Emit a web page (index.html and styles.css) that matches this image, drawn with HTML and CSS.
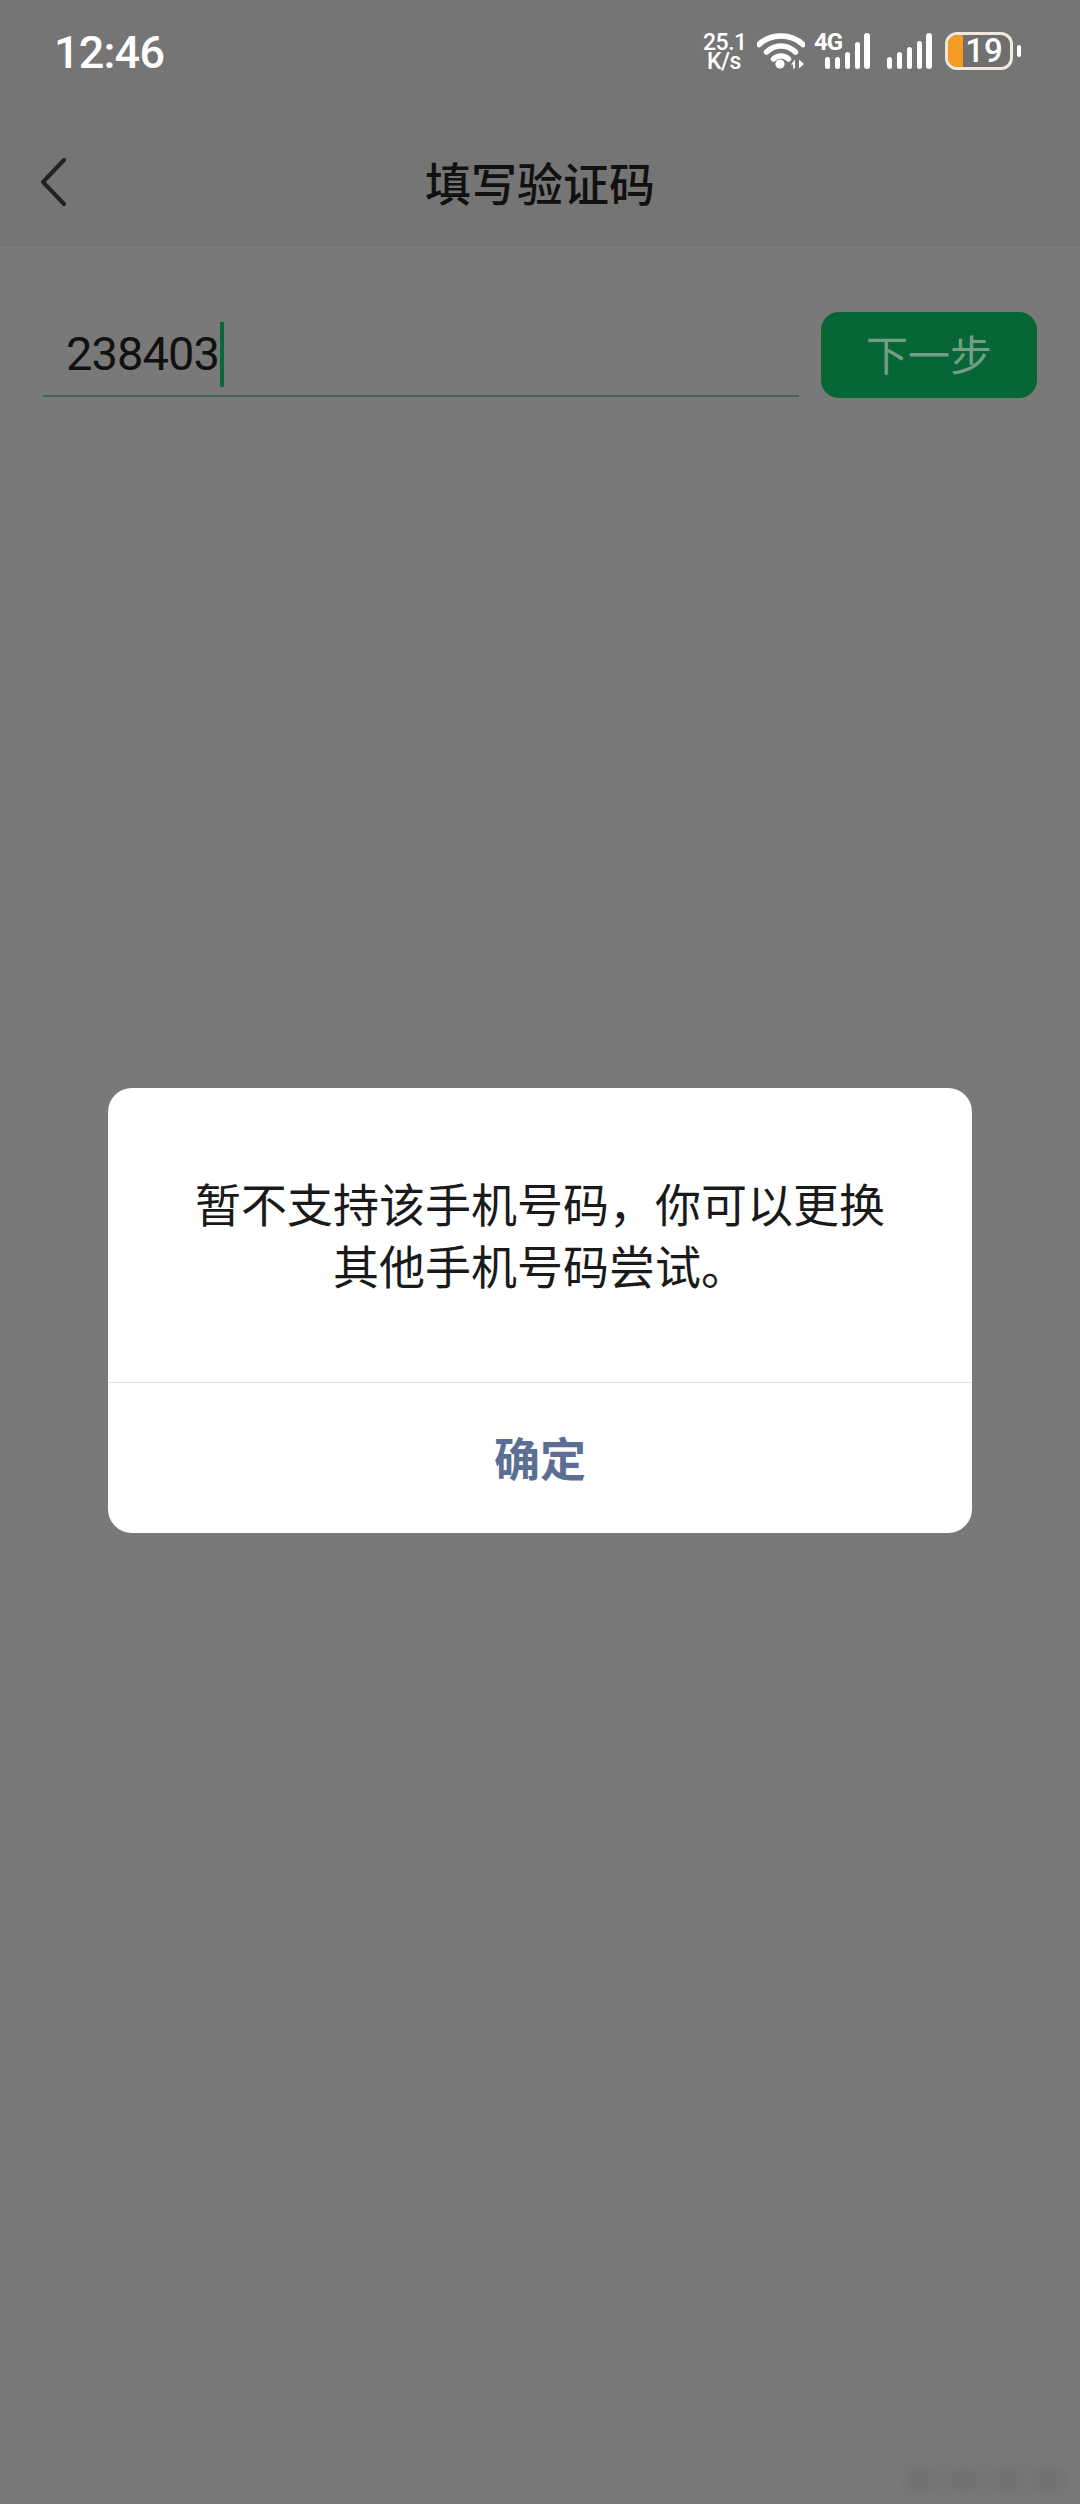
FILE: index.html
```html
<!DOCTYPE html>
<html lang="zh-CN">
<head>
<meta charset="utf-8">
<title>填写验证码</title>
<link rel="stylesheet" href="styles.css">
</head>
<body>
<div class="screen">
  <div class="status">
    <span class="time">12:46</span>
    <div class="status-icons">
      <div class="speed">25.1<br>K/s</div>
      <svg class="wifi" width="48" height="36" viewBox="0 0 48 36">
        <path d="M2 11.5C14 0 34 0 46 11.5" class="arc"/>
        <path d="M9.5 19C18 11 30 11 38.5 19" class="arc"/>
        <path d="M16.5 26C21 22 27 22 31.5 26" class="arc"/>
        <circle cx="23" cy="31" r="4.6" fill="#fff"/>
        <path d="M34 31.5l4-5v9h-1.8v-4zM42 26.5l5 4.5-5 4.5z" fill="#fff"/>
      </svg>
      <div class="net">
        <span class="g4">4G</span>
        <svg width="50" height="36" viewBox="0 0 50 36">
          <rect x="1" y="24" width="5" height="12" rx="2.5"/>
          <rect x="11" y="24" width="5" height="12" rx="2.5"/>
          <rect x="21" y="19" width="5" height="17" rx="2.5"/>
          <rect x="31" y="9" width="5" height="27" rx="2.5"/>
          <rect x="40" y="0" width="6" height="36" rx="3"/>
        </svg>
      </div>
      <svg class="sig" width="46" height="36" viewBox="0 0 46 36">
        <rect x="0" y="24" width="5" height="12" rx="2.5"/>
        <rect x="10" y="19" width="5" height="17" rx="2.5"/>
        <rect x="20" y="14" width="5" height="22" rx="2.5"/>
        <rect x="30" y="8" width="5" height="28" rx="2.5"/>
        <rect x="39" y="0" width="6" height="36" rx="3"/>
      </svg>
      <div class="battery">
        <div class="batt-body"><i class="batt-fill"></i><span>19</span></div>
        <i class="batt-cap"></i>
      </div>
    </div>
  </div>

  <header class="nav">
    <svg class="back" width="28" height="48" viewBox="0 0 28 48">
      <path d="M25 2L4 24l21 22" fill="none" stroke="#222" stroke-width="4" stroke-linecap="round" stroke-linejoin="round"/>
    </svg>
    <h1>填写验证码</h1>
  </header>

  <form class="form">
    <div class="field"><span class="value">238403</span><i class="caret"></i></div>
    <div class="next">下一步</div>
  </form>

  <div class="watermark"><i></i><i></i><i></i><i></i></div>

  <div class="overlay">
    <div class="dialog">
      <p class="msg">暂不支持该手机号码，你可以更换<br>其他手机号码尝试。</p>
      <div class="ok">确定</div>
    </div>
  </div>
</div>
</body>
</html>
```
FILE: styles.css
```css
* { box-sizing: border-box; }
html, body { margin: 0; padding: 0; }
body { font-family: Roboto, "Noto Sans CJK SC", sans-serif; background: #787878; }
.screen { position: relative; width: 1080px; height: 2504px; background: #797979; overflow: hidden; }

.status { height: 117px; padding: 27px 59px 0 54px; display: flex; justify-content: space-between; align-items: flex-start; background: #757575; color: #fff; }
.time { font-size: 45px; line-height: 52px; font-weight: 500; letter-spacing: -0.8px; }
.status-icons { display: flex; align-items: flex-start; padding-top: 6px; }
.speed { width: 42px; text-align: center; font-size: 23px; line-height: 19px; font-weight: 500; letter-spacing: -0.5px; margin-right: 12px; }
.wifi { margin-right: 10px; }
.arc { fill: none; stroke: #fff; stroke-width: 5.5; stroke-linecap: round; }
.net { position: relative; width: 50px; height: 36px; margin-right: 22px; }
.net svg, .sig { fill: #fff; display: block; }
.g4 { position: absolute; left: -1px; top: -3px; font-size: 24px; line-height: 24px; font-weight: 700; letter-spacing: -1px; color: #fff; z-index: 1; width: 27px; }
.net svg { position: absolute; left: 9px; top: 0; }
.sig { margin-right: 12px; }
.battery { display: flex; align-items: center; margin-top: -1px; height: 38px; }
.batt-body { position: relative; width: 68px; height: 38px; border: 3px solid #efe9dd; border-radius: 12px; background: #6f6f6f; overflow: hidden; display: flex; align-items: center; justify-content: center; padding-left: 10px; }
.batt-fill { position: absolute; left: 0; top: 0; bottom: 0; width: 15px; background: #f59a23; }
.batt-body span { position: relative; font-size: 33px; line-height: 32px; font-weight: 500; color: #fff; }
.batt-cap { width: 4px; height: 12px; margin-left: 4px; background: #fff; border-radius: 2px; }

.nav { position: relative; height: 131px; display: flex; align-items: center; justify-content: center; background: #757575; border-bottom: 1px solid #7d7d7d; }
.nav h1 { margin: 0 0 3px; font-family: "Noto Sans CJK SC", sans-serif; font-size: 46px; line-height: 60px; font-weight: 500; color: #111; }
.back { position: absolute; left: 39px; top: 41px; }

.form { display: flex; gap: 22px; padding: 64px 43px 0; align-items: flex-start; }
.field { width: 756px; height: 85px; display: flex; align-items: center; padding: 0 0 0 23px; border-bottom: 2px solid #3f6b55; }
.value { font-size: 47px; line-height: 52px; color: #111; letter-spacing: -0.9px; margin-top: 1px; }
.caret { width: 4px; height: 65px; margin-left: 1px; margin-top: 2px; background: #07693a; }
.next { width: 216px; height: 86px; display: flex; align-items: center; justify-content: center; padding-bottom: 5px; border-radius: 18px; background: #066636; color: #739d87; font-family: "Noto Sans CJK SC", sans-serif; font-size: 42px; line-height: 50px; }

.watermark { position: absolute; right: 14px; bottom: 10px; display: flex; gap: 6px; filter: blur(6px); opacity: .4; }
.watermark i { display: block; width: 36px; height: 28px; background: #696969; border-radius: 8px; }

.overlay { position: absolute; inset: 0; display: flex; justify-content: center; align-items: flex-start; padding-top: 1088px; }
.dialog { width: 864px; height: 445px; background: #fff; border-radius: 24px; display: flex; flex-direction: column; overflow: hidden; }
.msg { flex: 1; margin: 0; padding-bottom: 5px; display: flex; align-items: center; justify-content: center; text-align: center; font-family: "Noto Sans CJK SC", sans-serif; font-size: 46px; line-height: 62px; color: #1a1a1a; border-bottom: 1px solid #e4e4e4; }
.ok { height: 150px; padding-bottom: 5px; display: flex; align-items: center; justify-content: center; font-family: "Noto Sans CJK SC", sans-serif; font-size: 46px; line-height: 60px; font-weight: 700; color: #5b6f95; }
```
